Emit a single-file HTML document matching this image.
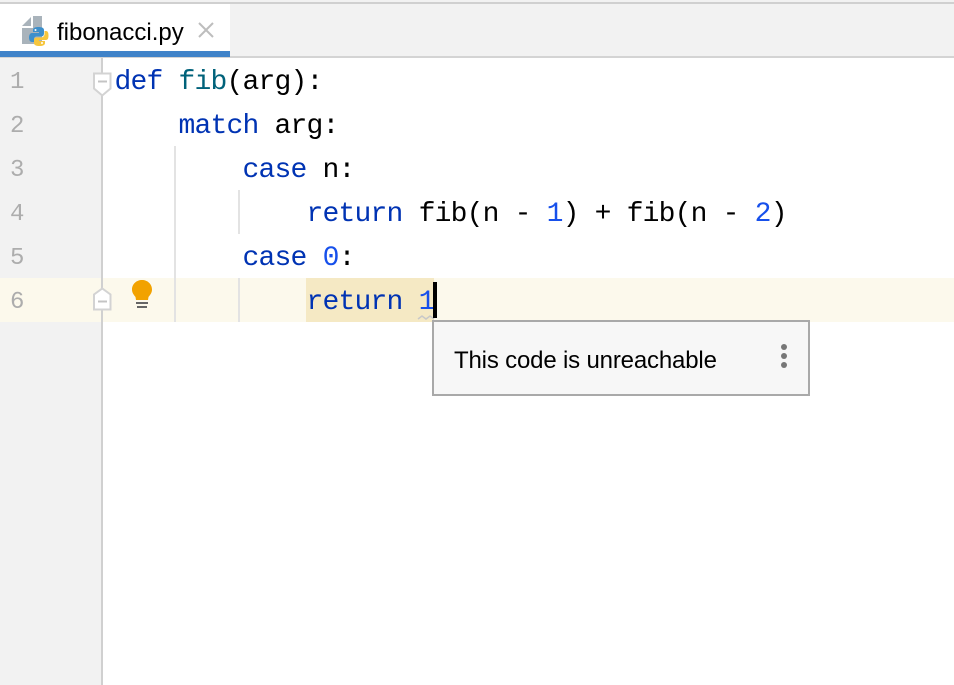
<!DOCTYPE html>
<html><head><meta charset="utf-8"><style>
html,body{margin:0;padding:0;background:#fff}
#p{position:relative;width:954px;height:685px;overflow:hidden;background:#fff}
#p div{position:absolute}
.l{left:114.5px;height:44px;white-space:pre;font:28px/44px "Liberation Mono",monospace;letter-spacing:-.8px;color:#000}
.n{left:10px;height:44px;font:24px/44px "Liberation Mono",monospace;color:#adadad}
.k{color:#0033b3}.f{color:#00627a}.d{color:#1750eb}
</style></head><body><div id="p">
<div style="left:0;top:0;width:954px;height:57px;background:#f2f2f2"></div>
<div style="left:0;top:2px;width:954px;height:2px;background:#d0d0d0"></div>
<div style="left:0;top:56px;width:954px;height:2px;background:#d4d4d4"></div>
<div style="left:0;top:4px;width:230px;height:47px;background:#fff"></div>
<div style="left:0;top:51px;width:230px;height:6px;background:#4083c9"></div>
<svg style="position:absolute;left:0;top:0" width="60" height="50" viewBox="0 0 60 50">
<path d="M22 26L31 17V26Z" fill="#a9b3bb"/>
<path d="M33 16H42V44H22V28H33Z" fill="#a9b3bb"/>
<path d="M44 33V30C44 28 42 27 38.500 27S33 28 33 30V32H39V33H32C30 33 29 35 29 37.500S30 42 32 42H34V39C34 37.500 35 36.500 37 36.500H41C43 36.500 44 35.500 44 33Z" fill="#3d8fcb"/>
<path d="M34 40V43C34 45 36 46 39.500 46S45 45 45 43V41H39V40H46C48 40 48.500 38 48.500 35.500S48 31 46 31H44.500V34C44.500 36 43 37.500 41 37.500H37C35 37.500 34 38.500 34 40Z" fill="#f6c63e"/>
<circle cx="35.500" cy="30" r="1" fill="#fff"/><circle cx="42" cy="43" r="1" fill="#fff"/>
</svg>
<div style="left:57px;top:16px;font:24px/34px 'Liberation Sans',sans-serif;color:#000;white-space:pre">fibonacci.py</div>
<svg style="position:absolute;left:197px;top:21px" width="18" height="18"><path d="M2 2L16 16M16 2L2 16" stroke="#bdbdbd" stroke-width="2"/></svg>

<div style="left:0;top:58px;width:101px;height:627px;background:#f2f2f2"></div>
<div style="left:101px;top:58px;width:2px;height:627px;background:#d0d0d0"></div>
<div style="left:0;top:278px;width:954px;height:44px;background:#fcf9ec"></div>
<div style="left:101px;top:278px;width:2px;height:44px;background:#d0d0d0"></div>
<div style="left:306px;top:278px;width:128px;height:44px;background:#f5e9c4"></div>

<div style="left:174px;top:146px;width:2px;height:176px;background:#e3e3e3"></div>
<div style="left:238px;top:190px;width:2px;height:44px;background:#e3e3e3"></div>
<div style="left:238px;top:278px;width:2px;height:44px;background:#e3e3e3"></div>

<div class="n" style="top:61px">1</div>
<div class="n" style="top:105px">2</div>
<div class="n" style="top:149px">3</div>
<div class="n" style="top:193px">4</div>
<div class="n" style="top:237px">5</div>
<div class="n" style="top:281px">6</div>

<div class="l" style="top:61px"><span class="k">def</span> <span class="f">fib</span>(arg):</div>
<div class="l" style="top:105px">    <span class="k">match</span> arg:</div>
<div class="l" style="top:149px">        <span class="k">case</span> n:</div>
<div class="l" style="top:193px">            <span class="k">return</span> fib(n - <span class="d">1</span>) + fib(n - <span class="d">2</span>)</div>
<div class="l" style="top:237px">        <span class="k">case</span> <span class="d">0</span>:</div>
<div class="l" style="top:281px">            <span class="k">return</span> <span class="d">1</span></div>

<svg style="position:absolute;left:92px;top:72px" width="20" height="26"><path d="M2 1.500h16.500v15l-8.250 7-8.250-7z" fill="#fff" stroke="#d3d3d3" stroke-width="2"/><path d="M6 9.500h9" stroke="#c4c4c4" stroke-width="2"/></svg>
<svg style="position:absolute;left:92px;top:287px" width="20" height="24"><path d="M2 22.500h16.500v-15l-8.250-6-8.250 6z" fill="#fff" stroke="#d3d3d3" stroke-width="2"/><path d="M6 14.500h9" stroke="#c4c4c4" stroke-width="2"/></svg>

<svg style="position:absolute;left:130px;top:279px" width="24" height="32">
<path d="M12 1C6.500 1 2 5 2 10.500c0 3.500 2 5.500 3.500 7.500L6 21h12l.5-3c1.500-2 3.500-4 3.500-7.500C22 5 17.500 1 12 1z" fill="#f2a200"/>
<rect x="6" y="23" width="12" height="2" fill="#666"/><rect x="7" y="27" width="10" height="2" fill="#666"/>
</svg>

<svg style="position:absolute;left:417px;top:314px" width="18" height="7"><path d="M1 5l4-3 4 3 4-3 4 3" fill="none" stroke="#c8c8c8" stroke-width="1.500"/></svg>
<div style="left:433px;top:282px;width:4px;height:36px;background:#000"></div>

<div style="left:432px;top:320px;width:374px;height:72px;border:2px solid #a9a9a9;background:#f7f7f7"></div>
<div style="left:454px;top:344px;font:24px/34px 'Liberation Sans',sans-serif;letter-spacing:-.17px;color:#000;white-space:pre">This code is unreachable</div>
<div style="left:781px;top:344px;width:6px;height:6px;border-radius:50%;background:#777"></div>
<div style="left:781px;top:353px;width:6px;height:6px;border-radius:50%;background:#777"></div>
<div style="left:781px;top:362px;width:6px;height:6px;border-radius:50%;background:#777"></div>
</div></body></html>
